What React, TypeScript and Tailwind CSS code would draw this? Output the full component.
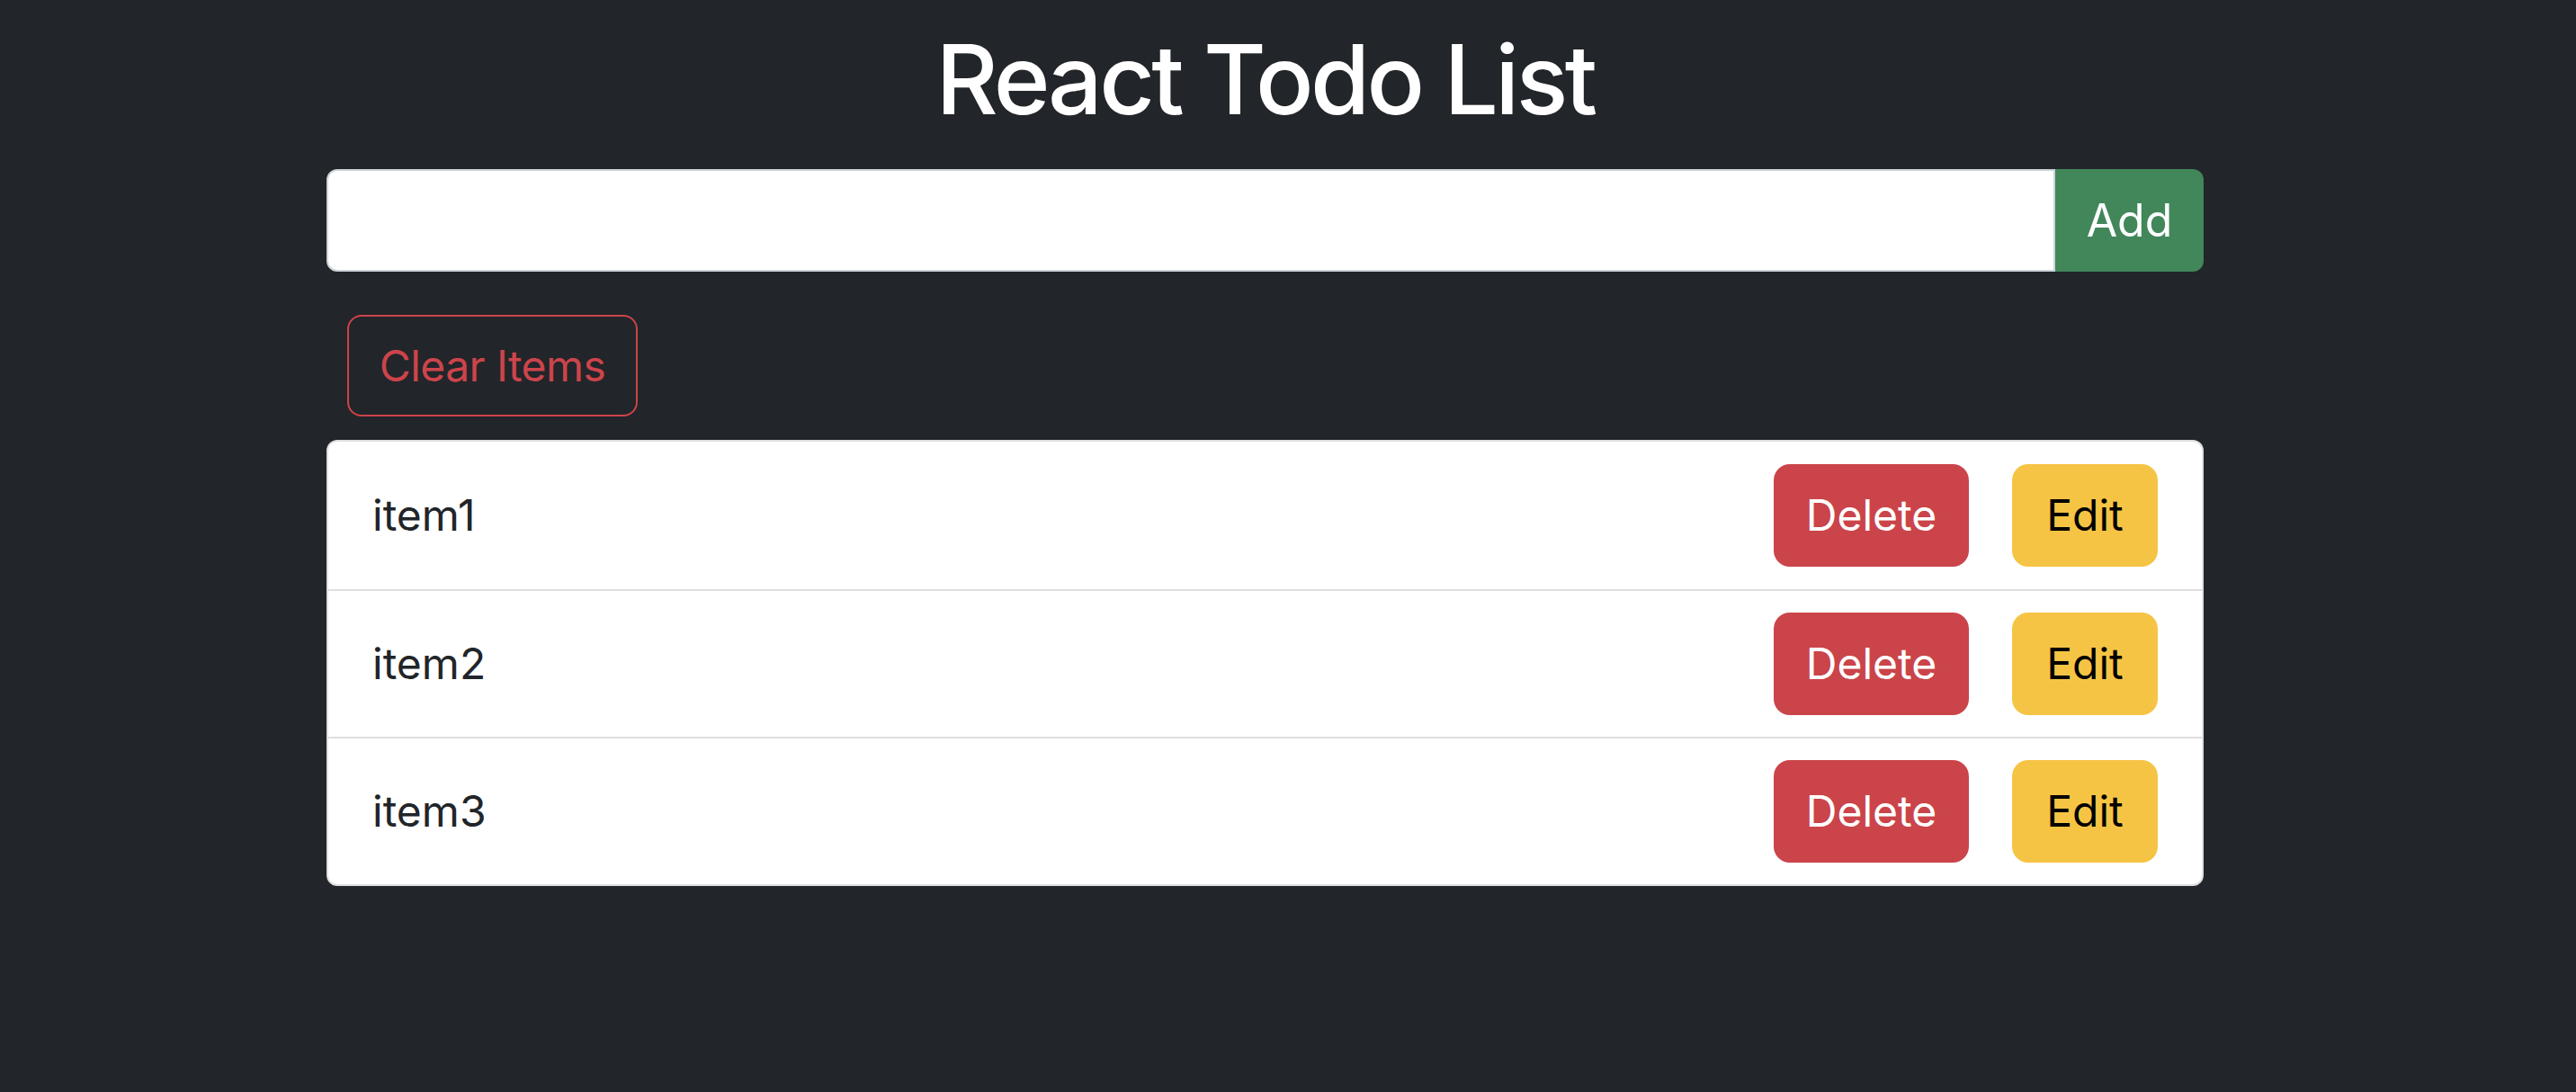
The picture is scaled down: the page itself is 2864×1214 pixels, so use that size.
import React from 'react';

const items = ['item1', 'item2', 'item3'];

export default function App() {
  return (
    <div
      className="min-h-[1214px] w-full bg-[#222529] pl-[363px] pr-[414px] pt-[24px]"
      style={{ fontFamily: 'Inter, "Noto Sans", sans-serif' }}
    >
      <h1 className="text-center text-[107px] font-medium leading-[128px] tracking-[-3.6px] text-white">React Todo List</h1>

      <div className="mt-[36px] flex h-[114px]">
        <input
          type="text"
          className="h-full flex-1 rounded-l-[12px] border-2 border-[#ced4da] bg-white px-6 text-[48px] text-[#212529] outline-none"
        />
        <button className="h-full w-[165px] rounded-r-[12px] bg-[#41875a] text-[50px] text-white">Add</button>
      </div>

      <button className="ml-[23px] mt-[48px] h-[113px] w-[323px] rounded-[16px] border-2 border-[#cc444b] text-[48px] tracking-[-0.6px] text-[#cc444b]">
        Clear Items
      </button>

      <ul className="mt-[26px] rounded-[12px] border-2 border-[#dfdfdf] bg-white">
        {items.map((item, i) => (
          <li
            key={item}
            className={`flex h-[164px] items-center px-[49px] ${i > 0 ? 'border-t-2 border-[#dfdfdf]' : ''}`}
          >
            <span className="flex-1 text-[48px] text-[#212529]">{item}</span>
            <button className="h-[114px] w-[217px] rounded-[18px] bg-[#ca444a] text-[48px] text-white">Delete</button>
            <button className="ml-[48px] h-[114px] w-[162px] rounded-[18px] bg-[#f6c444] text-[48px] text-black">Edit</button>
          </li>
        ))}
      </ul>
    </div>
  );
}
